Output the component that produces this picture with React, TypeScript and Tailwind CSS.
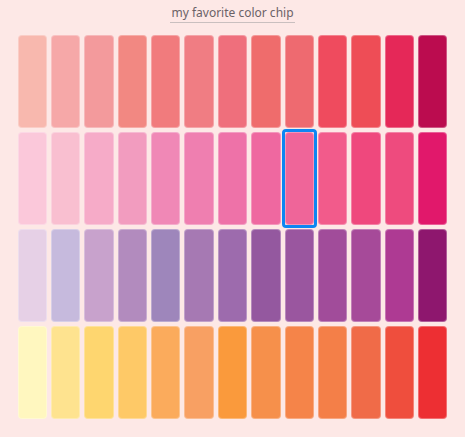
import React from "react";

const rows: string[][] = [
  ["#f8b8ae", "#f6a8a8", "#f39a9c", "#f28882", "#f17b7d", "#f07d83", "#ef6f7c", "#ef6c6c", "#ee6a70", "#ef4b5e", "#ee4d56", "#e52858", "#bb0c4f"],
  ["#fbc8da", "#f9bfd0", "#f6abc8", "#f29cbf", "#f088b6", "#ef7fb0", "#ee72a8", "#ef68a0", "#ef6599", "#f25b8b", "#ef487d", "#ee4b7e", "#e1186b"],
  ["#e6d0e6", "#c6badd", "#c8a2cc", "#b28bbe", "#9e86bb", "#a679b3", "#9d6bad", "#94589f", "#9a569f", "#a14c9a", "#a64a99", "#ae3a93", "#8e176e"],
  ["#fff7bf", "#fee38f", "#fed66f", "#fec967", "#fbab5c", "#f8a063", "#fa9a3c", "#f6904b", "#f58449", "#f47f48", "#f06b48", "#ef4e3d", "#ed2f33"],
];

export default function App() {
  return (
    <div
      className="w-[465px] h-[437px] bg-[#fde8e6] flex flex-col items-center pt-[5px]"
      style={{ fontFamily: '"Noto Sans", "Open Sans", sans-serif' }}
    >
      <div className="text-[12px] leading-[16px] text-[#6b6266] border-b border-[#c9bfbf] px-[1px] pb-[1px]">
        my favorite color chip
      </div>
      <div className="mt-[12px] w-[430px] flex flex-col gap-[4px]">
        {rows.map((row, r) => (
          <div key={r} className="grid grid-cols-13 gap-[4px] h-[93px]">
            {row.map((c, i) =>
              r === 1 && i === 8 ? (
                <div key={i} className="outline-[3px] outline-solid outline-[#0d86f2] rounded-[1px] flex">
                  <div className="flex-1 rounded-[4px] border border-white/30" style={{ backgroundColor: c }} />
                </div>
              ) : (
                <div
                  key={i}
                  className="rounded-[4px] border border-white/30"
                  style={{ backgroundColor: c }}
                />
              )
            )}
          </div>
        ))}
      </div>
    </div>
  );
}
